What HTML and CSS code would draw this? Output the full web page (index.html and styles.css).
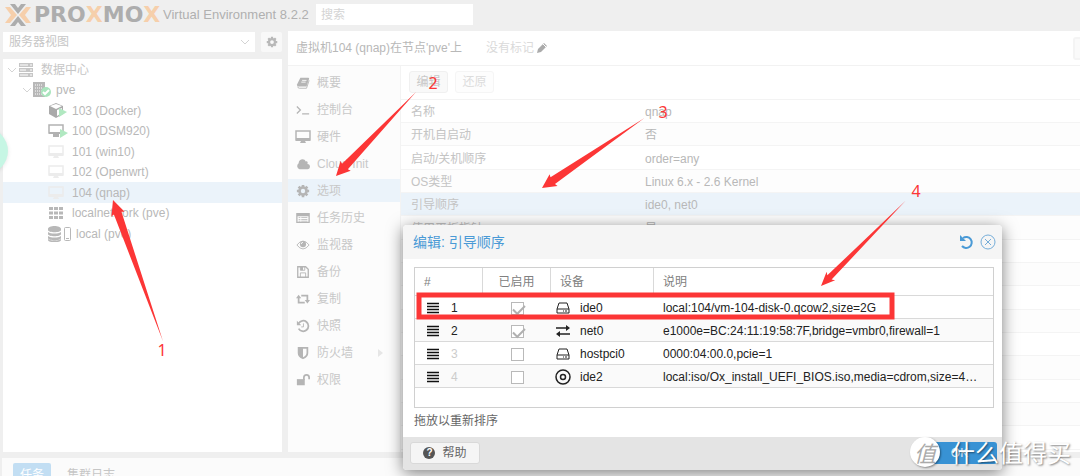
FILE: index.html
```html
<!DOCTYPE html>
<html lang="zh-CN">
<head>
  <meta charset="UTF-8">
  <meta name="viewport" content="width=device-width, initial-scale=1.0">
  <title>pve - Proxmox Virtual Environment</title>
  <link rel="stylesheet" href="styles.css">
</head>
<body>
  <svg class="sprite" aria-hidden="true">
    <symbol id="gear" viewBox="0 0 16 16"><circle cx="8" cy="8" r="4" fill="none" stroke="currentColor" stroke-width="3"/><path d="M8 1v3M8 12v3M1 8h3M12 8h3M3 3l2 2M11 11l2 2M13 3l-2 2M5 11l-2 2" stroke="currentColor" stroke-width="3"/></symbol>
    <symbol id="chevron" viewBox="0 0 10 10"><path d="M1 3l4 4 4-4" fill="none" stroke="currentColor"/></symbol>
    <symbol id="server" viewBox="0 0 16 14"><path d="M1 0h14v4H1zM1 5h14v4H1zM1 10h14v4H1z" fill="currentColor"/><path d="M2 2h8M2 7h6M2 12h8" stroke="#fff"/><path d="M13 1v2M13 6v2M13 11v2" stroke="#fff"/></symbol>
    <symbol id="node" viewBox="0 0 18 16"><path d="M0 0h12v15H0z" fill="currentColor"/><path d="M2 3h8M2 6h8M2 9h8M2 12h8" stroke="#fff" stroke-dasharray="1 1"/><circle cx="13" cy="10" r="5" fill="#a9e5bd"/><path d="M10 10l2 2 4-4" fill="none" stroke="#fff" stroke-width="2"/></symbol>
    <symbol id="cube" viewBox="0 0 20 16"><path d="M1 3l7-3 7 3v8l-7 4-7-4z" fill="#aaa"/><path d="M2 3l6-2 6 2-6 3zM9 7l5-2v5l-5 3z" fill="#fff"/><path d="M11 5l8 4-8 5z" fill="#b1e8c1"/></symbol>
    <symbol id="screen" viewBox="0 0 16 14"><path d="M1 1h14v9H1z" fill="none" stroke="currentColor" stroke-width="1.5"/><path d="M1 8h14v3H1zM6 11h4l1 2H5z" fill="currentColor"/></symbol>
    <symbol id="screen-on" viewBox="0 0 20 16"><path d="M1 2h14v8H1z" fill="none" stroke="#b2b2b2" stroke-width="1.5"/><path d="M1 9h11v2H1zM5 11h6v3H5z" fill="#b2b2b2"/><path d="M12 6l8 4-8 5z" fill="#b1e8c1"/></symbol>
    <symbol id="grid" viewBox="0 0 16 14"><path d="M1 1h4v3H1zM6 1h4v3H6zM11 1h4v3h-4zM1 5.500h4v3H1zM6 5.500h4v3H6zM11 5.500h4v3h-4zM1 10h4v3H1zM6 10h4v3H6zM11 10h4v3h-4z" fill="currentColor"/></symbol>
    <symbol id="store" viewBox="0 0 24 16"><path d="M0 3c0-4 13-4 13 0v1c0 3-13 3-13 0zM0 6c3 2 10 2 13 0v2c0 3-13 3-13 0zM0 10c3 2 10 2 13 0v2c0 3-13 3-13 0zM0 13c3 2 10 2 13 0v1c0 3-13 3-13 0z" fill="currentColor"/><rect x="16.5" y="1.500" width="6" height="13" rx="1" fill="none" stroke="currentColor"/><path d="M18 12.500h3" stroke="currentColor"/></symbol>
    <symbol id="book" viewBox="0 0 16 16"><path d="M5 2h9q1 0 1 1l-3 9H3q-2 0-2-2z" fill="currentColor"/><path d="M7 5h5M6 7h5" stroke="#fcfcfc"/><path d="M2 12q0 2 2 2h8l3-9" fill="none" stroke="currentColor"/></symbol>
    <symbol id="terminal" viewBox="0 0 16 16"><path d="M1 4l4 4-4 4M7 12.500h8" fill="none" stroke="currentColor" stroke-width="1.500"/></symbol>
    <symbol id="cloud" viewBox="0 0 16 16"><path d="M4 14a4 4 0 0 1-1-7C3 2 10 1 11 5c2-1 3 1 2 3 4 0 4 6 0 6z" fill="currentColor"/></symbol>
    <symbol id="list" viewBox="0 0 16 16"><path d="M1 3h14v10H1z" fill="none" stroke="currentColor" stroke-width="1.500"/><path d="M1 3h14v3H1zM3 7h2v1H3zM3 9h2v1H3zM3 11h2v1H3zM6 7h7v1H6zM6 9h7v1H6zM6 11h7v1H6z" fill="currentColor"/></symbol>
    <symbol id="eye" viewBox="0 0 16 16"><path d="M1 8q7-9 14 0-7 9-14 0z" fill="none" stroke="currentColor"/><circle cx="8" cy="7" r="3.500" fill="currentColor"/><path d="M6 7q0-2 2-2" stroke="#fcfcfc" fill="none"/></symbol>
    <symbol id="floppy" viewBox="0 0 16 16"><path d="M2 2h9l3 3v9H2z" fill="none" stroke="currentColor" stroke-width="1.500"/><path d="M5 14V9h6v5M5 2v4h5V2" fill="none" stroke="currentColor"/><path d="M5 2h3v4H5z" fill="currentColor"/></symbol>
    <symbol id="repeat" viewBox="0 0 16 16"><path d="M3 6v6h7M6 4h7v6" fill="none" stroke="currentColor" stroke-width="2"/><path d="M0 7l3-4 3 4zM10 9h6l-3 4z" fill="currentColor"/></symbol>
    <symbol id="history" viewBox="0 0 16 16"><path d="M3 5a6 6 0 1 1 0 6" fill="none" stroke="currentColor" stroke-width="2"/><path d="M1 2v5h5z" fill="currentColor"/><path d="M8.500 5v4H6" fill="none" stroke="currentColor"/></symbol>
    <symbol id="shield" viewBox="0 0 16 16"><path d="M3 2h10v6q0 4-5 6-5-2-5-6z" fill="none" stroke="currentColor" stroke-width="2"/><path d="M3 2h5v12q-5-3-5-6z" fill="currentColor"/></symbol>
    <symbol id="unlock" viewBox="0 0 16 16"><path d="M1 7h9v7H1z" fill="currentColor"/><path d="M9 8V5q0-3 3-3t3 3v2" fill="none" stroke="currentColor" stroke-width="2"/></symbol>
    <symbol id="pencil" viewBox="0 0 12 12"><path d="M1 11l1-4 6-6 3 3-6 6z" fill="currentColor"/><path d="M7 2l3 3" stroke="#fff"/></symbol>
    <symbol id="undo" viewBox="0 0 16 16"><path d="M4 4a5.500 5.500 0 1 1-1 8" fill="none" stroke="currentColor" stroke-width="2"/><path d="M1 1v6h6z" fill="currentColor"/></symbol>
    <symbol id="close" viewBox="0 0 16 16"><circle cx="8" cy="8" r="7" fill="none" stroke="currentColor"/><path d="M5 5l6 6M11 5l-6 6" stroke="currentColor"/></symbol>
    <symbol id="bars" viewBox="0 0 12 12"><path d="M0 1.500h12M0 4.500h12M0 7.500h12M0 10.500h12" stroke="currentColor" stroke-width="1.500"/></symbol>
    <symbol id="disk" viewBox="0 0 16 16"><path d="M2 9l2-6h8l2 6v4H2zM2 9h12" fill="none" stroke="currentColor" stroke-linejoin="round"/><path d="M8 11h1M10 11h2" stroke="currentColor"/></symbol>
    <symbol id="exchange" viewBox="0 0 16 16"><path d="M1 5h11M4 11h11" stroke="currentColor" stroke-width="1.500"/><path d="M11 2l4 3-4 3zM5 8l-4 3 4 3z" fill="currentColor"/></symbol>
    <symbol id="disc" viewBox="0 0 16 16"><circle cx="8" cy="8" r="7" fill="none" stroke="currentColor" stroke-width="1.500"/><circle cx="8" cy="8" r="2.500" fill="none" stroke="currentColor" stroke-width="1.500"/></symbol>
  </svg>

  <header class="topbar">
    <svg class="logo-mark" viewBox="0 0 28 24" aria-hidden="true">
      <path d="M1 4h5l7 8-7 8H1l6-8zM27 4h-5l-7 8 7 8h5l-6-8z" fill="#f6cfab"/>
      <path d="M6 1h5l3 4 3-4h5l-8 10zM6 23h5l3-4 3 4h5l-8-10z" fill="#adadad"/>
    </svg>
    <span class="logo-text">PRO<b>X</b>MO<b>X</b></span>
    <span class="version">Virtual Environment 8.2.2</span>
    <input class="search" type="text" placeholder="搜索" aria-label="搜索">
  </header>

  <main class="workspace">
    <aside class="sidebar">
      <div class="view-bar">
        <div class="view-select">
          <select aria-label="视图"><option>服务器视图</option></select>
          <svg class="chevron"><use href="#chevron"/></svg>
        </div>
        <button class="gear-button" aria-label="设置"><svg><use href="#gear"/></svg></button>
      </div>
      <ul class="tree">
        <li class="root"><svg class="chevron"><use href="#chevron"/></svg><svg class="tree-icon"><use href="#server"/></svg><span>数据中心</span></li>
        <li class="host"><svg class="chevron"><use href="#chevron"/></svg><svg class="tree-icon"><use href="#node"/></svg>pve</li>
        <li><svg class="tree-icon"><use href="#cube"/></svg>103 (Docker)</li>
        <li><svg class="tree-icon"><use href="#screen-on"/></svg>100 (DSM920)</li>
        <li><svg class="tree-icon off"><use href="#screen"/></svg>101 (win10)</li>
        <li><svg class="tree-icon off"><use href="#screen"/></svg>102 (Openwrt)</li>
        <li class="selected"><svg class="tree-icon off"><use href="#screen"/></svg>104 (qnap)</li>
        <li><svg class="tree-icon net"><use href="#grid"/></svg>localnetwork (pve)</li>
        <li><svg class="tree-icon wide"><use href="#store"/></svg>local (pve)</li>
      </ul>
    </aside>

    <section class="panel">
      <div class="panel-title">
        <span>虚拟机104 (qnap)在节点'pve'上</span>
        <span class="tags">没有标记<svg><use href="#pencil"/></svg></span>
        <button class="start-button" aria-label="启动"></button>
      </div>
      <div class="panel-body">
        <nav class="menu">
          <a href="#"><svg><use href="#book"/></svg>概要</a>
          <a href="#"><svg><use href="#terminal"/></svg>控制台</a>
          <a href="#"><svg><use href="#screen"/></svg>硬件</a>
          <a href="#"><svg><use href="#cloud"/></svg>Cloud-Init</a>
          <a href="#" class="selected"><svg><use href="#gear"/></svg>选项</a>
          <a href="#"><svg><use href="#list"/></svg>任务历史</a>
          <a href="#"><svg><use href="#eye"/></svg>监视器</a>
          <a href="#"><svg><use href="#floppy"/></svg>备份</a>
          <a href="#"><svg><use href="#repeat"/></svg>复制</a>
          <a href="#"><svg><use href="#history"/></svg>快照</a>
          <a href="#" class="has-sub"><svg><use href="#shield"/></svg>防火墙</a>
          <a href="#"><svg><use href="#unlock"/></svg>权限</a>
        </nav>
        <div class="content">
          <div class="toolbar">
            <button>编辑</button>
            <button class="disabled">还原</button>
          </div>
          <table class="options">
            <tr><th>名称</th><td>qnap</td></tr>
            <tr><th>开机自启动</th><td>否</td></tr>
            <tr><th>启动/关机顺序</th><td>order=any</td></tr>
            <tr><th>OS类型</th><td>Linux 6.x - 2.6 Kernel</td></tr>
            <tr class="selected"><th>引导顺序</th><td>ide0, net0</td></tr>
            <tr><th>使用平板指针</th><td>是</td></tr>
            <tr><th></th><td></td></tr>
            <tr><th></th><td></td></tr>
            <tr><th></th><td></td></tr>
            <tr><th></th><td></td></tr>
            <tr><th></th><td></td></tr>
            <tr><th></th><td></td></tr>
            <tr><th></th><td></td></tr>
            <tr><th></th><td></td></tr>
            <tr><th></th><td></td></tr>
          </table>
        </div>
      </div>
    </section>
  </main>

  <footer class="log-panel">
    <button class="tab active">任务</button>
    <button class="tab">集群日志</button>
  </footer>

  <div class="float-ball"></div>

  <div class="dialog" role="dialog" aria-labelledby="dialog-title">
    <div class="dialog-header">
      <h2 id="dialog-title">编辑: 引导顺序</h2>
      <button aria-label="重置"><svg><use href="#undo"/></svg></button>
      <button class="close" aria-label="关闭"><svg><use href="#close"/></svg></button>
    </div>
    <div class="dialog-body">
      <div class="boot-box">
        <table class="boot-table">
          <colgroup><col class="col-num"><col class="col-on"><col class="col-dev"><col></colgroup>
          <thead>
            <tr><th>#</th><th class="center">已启用</th><th>设备</th><th>说明</th></tr>
          </thead>
          <tbody>
            <tr>
              <td><div class="order"><svg><use href="#bars"/></svg>1</div></td>
              <td class="center"><input type="checkbox" aria-label="ide0" checked></td>
              <td><div class="device"><svg><use href="#disk"/></svg>ide0</div></td>
              <td>local:104/vm-104-disk-0.qcow2,size=2G</td>
            </tr>
            <tr>
              <td><div class="order"><svg><use href="#bars"/></svg>2</div></td>
              <td class="center"><input type="checkbox" aria-label="net0" checked></td>
              <td><div class="device"><svg><use href="#exchange"/></svg>net0</div></td>
              <td>e1000e=BC:24:11:19:58:7F,bridge=vmbr0,firewall=1</td>
            </tr>
            <tr>
              <td><div class="order unused"><svg><use href="#bars"/></svg>3</div></td>
              <td class="center"><input type="checkbox" aria-label="hostpci0"></td>
              <td><div class="device"><svg><use href="#disk"/></svg>hostpci0</div></td>
              <td>0000:04:00.0,pcie=1</td>
            </tr>
            <tr>
              <td><div class="order unused"><svg><use href="#bars"/></svg>4</div></td>
              <td class="center"><input type="checkbox" aria-label="ide2"></td>
              <td><div class="device"><svg><use href="#disc"/></svg>ide2</div></td>
              <td>local:iso/Ox_install_UEFI_BIOS.iso,media=cdrom,size=4…</td>
            </tr>
          </tbody>
        </table>
      </div>
      <p class="hint">拖放以重新排序</p>
    </div>
    <div class="dialog-footer">
      <button class="help"><span class="help-mark">?</span>帮助</button>
      <button class="ok">OK</button>
    </div>
  </div>

  <!-- step arrows, each drawn from its tip along the x axis -->
  <svg class="notes" viewBox="0 0 1080 476">
    <rect x="419" y="295" width="473" height="22"/>
    <polygon transform="translate(113 200) rotate(70.5)" points="0,0 15,-7 14,-4 150,0 14,4 15,7"/>
    <polygon transform="translate(336 176) rotate(-46.4)" points="0,0 14,-7 13,-4 116,0 13,4 14,7"/>
    <polygon transform="translate(542 188) rotate(-34.3)" points="0,0 14,-7 13,-4 124,0 13,4 14,7"/>
    <polygon transform="translate(821 286) rotate(-45.2)" points="0,0 14,-6 12,-3 120,0 12,3 14,6"/>
    <text x="162" y="356">1</text>
    <text x="433" y="89">2</text>
    <text x="663" y="118">3</text>
    <text x="916" y="197">4</text>
  </svg>

  <div class="watermark"><span class="badge">值</span>什么值得买</div>
</body>
</html>
```

FILE: styles.css
```css
* {
  box-sizing: border-box;
}

body {
  margin: 0;
  height: 100vh;
  overflow: hidden;
  position: relative;
  display: flex;
  flex-direction: column;
  background: #efefef;
  color: #b8b8b8;
  font-family: "Liberation Sans", "Noto Sans CJK SC", sans-serif;
  font-size: 12px;
  line-height: 16px;
}

button,
input,
select {
  font: inherit;
  color: inherit;
  margin: 0;
  padding: 0;
}

svg {
  flex: none;
}

.sprite {
  position: absolute;
  width: 0;
  height: 0;
}

/* top bar */
.topbar {
  display: flex;
  align-items: center;
  height: 31px;
  padding: 0 4px 2px;
}

.logo-mark {
  width: 28px;
  height: 24px;
}

.logo-text {
  margin-left: 2px;
  width: 129px;
  font-family: "DejaVu Sans", sans-serif;
  font-weight: bold;
  font-size: 22px;
  line-height: 24px;
  color: #adadad;
}

.logo-text b {
  color: #f6cfab;
}

.version {
  font-size: 13px;
  width: 149px;
  color: #b0b0b0;
}

.search {
  width: 157px;
  height: 21px;
  margin-left: 4px;
  padding: 0 5px;
  border: none;
  background: #fff;
}

.search::placeholder {
  color: #d4d4d4;
}

/* left side */
.workspace {
  flex: 1;
  min-height: 0;
  display: flex;
  gap: 6px;
  padding: 0 0 6px 3px;
}

.sidebar {
  width: 279px;
  flex: none;
  display: flex;
  flex-direction: column;
  gap: 7px;
  padding-top: 1px;
}

.view-bar {
  display: flex;
  gap: 6px;
}

.view-select {
  flex: 1;
  display: flex;
  align-items: center;
  height: 20px;
  padding: 0 5px 0 6px;
  background: #fff;
}

.view-select select {
  flex: 1;
  border: none;
  background: none;
  appearance: none;
  color: #c6c6c6;
}

.chevron {
  width: 10px;
  height: 10px;
  color: #d4d4d4;
}

.gear-button {
  width: 21px;
  height: 20px;
  border: none;
  border-radius: 2px;
  background: #f8f8f8;
  display: flex;
  align-items: center;
  justify-content: center;
}

.gear-button svg {
  width: 12px;
  height: 12px;
}

.tree {
  flex: 1;
  margin: 0;
  padding: 0;
  list-style: none;
  background: #fff;
}

.tree li {
  display: flex;
  align-items: center;
  height: 21px;
  padding-left: 45px;
}

.tree li:nth-child(even) {
  height: 20px;
}

.tree .root {
  padding-left: 4px;
  color: #c6c6c6;
}

.tree .root .tree-icon {
  width: 16px;
  margin: 0 7px 0 1px;
}

.tree .host {
  padding-left: 19px;
}

.tree .host .tree-icon {
  width: 18px;
  margin: 0 5px 0 1px;
}

.tree-icon {
  width: 20px;
  height: 16px;
  margin-right: 4px;
}

.tree-icon.off,
.tree-icon.net {
  width: 16px;
  margin-right: 8px;
}

.tree-icon.off {
  color: #ececec;
}

.tree-icon.wide {
  width: 24px;
}

.tree .selected {
  background: #ebf3fa;
}

/* vm panel */
.panel {
  flex: 1;
  min-width: 0;
  display: flex;
  flex-direction: column;
  overflow: hidden;
  background: #fff;
}

.panel-title {
  display: flex;
  align-items: center;
  height: 35px;
  padding-left: 8px;
  border-bottom: 1px solid #f2f2f2;
}

.tags {
  display: flex;
  align-items: center;
  margin-left: 24px;
  color: #dadada;
}

.tags svg {
  width: 12px;
  height: 12px;
  margin-left: 2px;
  color: #ababab;
}

/* runs past the edge of the panel */
.start-button {
  width: 60px;
  height: 23px;
  margin-left: auto;
  margin-right: -53px;
  border: 2px solid #f4f4f4;
  border-radius: 3px;
  background: #fafafa;
}

.panel-body {
  flex: 1;
  min-height: 0;
  display: flex;
}

.menu {
  width: 113px;
  flex: none;
  display: flex;
  flex-direction: column;
  gap: 4px;
  padding-top: 5px;
  background: #fcfcfc;
  border-right: 1px solid #f3f3f3;
}

.menu a {
  display: flex;
  align-items: center;
  gap: 6px;
  height: 23px;
  padding-left: 7px;
  color: #c8c8c8;
  text-decoration: none;
}

.menu svg {
  width: 16px;
  height: 14px;
  color: #b5b5b5;
}

.menu .selected {
  background: #ebf3fa;
}

.menu .has-sub::after {
  content: "";
  margin: 0 17px 0 auto;
  border-left: 5px solid #e6e6e6;
  border-top: 4px solid transparent;
  border-bottom: 4px solid transparent;
}

.content {
  flex: 1;
  min-width: 0;
}

.toolbar {
  display: flex;
  gap: 7px;
  padding: 5px 8px 6px;
  border-bottom: 1px solid #f3f3f3;
}

.toolbar button {
  width: 39px;
  height: 22px;
  border: 1px solid #f0f0f0;
  border-radius: 3px;
  background: #f9f9f9;
  color: #c8c8c8;
}

.toolbar .disabled {
  background: #fdfdfd;
  border-color: #f5f5f5;
  color: #dcdcdc;
}

.options {
  width: 100%;
  table-layout: fixed;
  border-spacing: 0;
}

.options th,
.options td {
  height: 23px;
  padding: 2px 0 0 10px;
  border-bottom: 1px solid #f4f4f4;
  font-weight: normal;
  text-align: left;
}

.options th {
  width: 234px;
  color: #c4c4c4;
}

.options tr:nth-child(3n) > * {
  height: 24px;
}

.options tr:nth-child(even) {
  background: #fdfdfd;
}

.options .selected {
  background: #ebf3fa;
}

/* task log */
.log-panel {
  flex: none;
  height: 18px;
  margin-left: 2px;
  padding: 5px 11px 0;
  display: flex;
  align-items: flex-start;
  gap: 3px;
  background: #fbfbfb;
}

.tab {
  flex: none;
  height: 24px;
  padding: 0 13px;
  border: none;
  border-radius: 2px;
  background: none;
  color: #c6c6c6;
}

.tab.active {
  padding: 0 7px;
  background: #c2def3;
  color: #fff;
}

.float-ball {
  position: absolute;
  left: -38px;
  top: 128px;
  width: 46px;
  height: 46px;
  border-radius: 50%;
  background: #c6f6e4;
  box-shadow: 0 1px 4px rgba(0, 0, 0, 0.1);
}

/* boot order window */
.dialog {
  position: absolute;
  left: 403px;
  top: 225px;
  width: 599px;
  border-radius: 4px;
  overflow: hidden;
  background: #fff;
  color: #222;
  box-shadow: 0 3px 16px rgba(0, 0, 0, 0.5);
}

.dialog-header {
  display: flex;
  align-items: center;
  gap: 5px;
  height: 34px;
  padding: 0 6px 0 10px;
  background: #f5f5f5;
  color: #4a9ad6;
}

.dialog-header h2 {
  flex: 1;
  margin: 0;
  font-size: 14px;
  font-weight: normal;
}

.dialog-header button {
  width: 16px;
  height: 16px;
  border: none;
  background: none;
}

.dialog-header svg {
  display: block;
  width: 16px;
  height: 16px;
}

.dialog-header .close {
  color: #75add8;
}

.dialog-body {
  padding: 8px 8px 8px 11px;
}

.boot-box {
  height: 141px;
  border: 1px solid #d0d0d0;
}

.boot-table {
  width: 100%;
  table-layout: fixed;
  border-spacing: 0;
}

.col-num,
.col-on {
  width: 68px;
}

.col-dev {
  width: 103px;
}

.boot-table th,
.boot-table td {
  height: 23px;
  padding: 2px 9px 0;
  border-bottom: 1px solid #d9d9d9;
  text-align: left;
  white-space: nowrap;
}

.boot-table th {
  height: 28px;
  padding-top: 0;
  border-right: 1px solid #d9d9d9;
  font-weight: normal;
  color: #808080;
}

.boot-table th:last-child {
  border-right: none;
}

.boot-table tbody tr:nth-child(even) {
  background: #fafafa;
}

.boot-table .center {
  text-align: center;
}

.order,
.device {
  display: flex;
  align-items: center;
}

.order {
  gap: 12px;
  padding-left: 3px;
}

.order.unused {
  color: #ccc;
}

.order svg {
  width: 12px;
  height: 12px;
  color: #111;
}

.device {
  gap: 9px;
  margin-left: -5px;
}

.device svg {
  width: 16px;
  height: 16px;
}

.boot-table input {
  appearance: none;
  display: block;
  width: 13px;
  height: 13px;
  margin: 0 auto;
  border: 1px solid #b9b9b9;
  background: #fff;
}

.boot-table input:checked::before {
  content: "";
  display: block;
  width: 10px;
  height: 5px;
  margin: 2px 1px;
  border-left: 2px solid #b0b0b0;
  border-bottom: 2px solid #b0b0b0;
  transform: rotate(-45deg);
}

.hint {
  margin: 5px 0 0;
  color: #666;
}

.dialog-footer {
  display: flex;
  justify-content: space-between;
  padding: 5px 5px 6px 7px;
  background: #e4e4e4;
}

.dialog-footer button {
  display: flex;
  align-items: center;
  justify-content: center;
  height: 22px;
  border-radius: 3px;
}

.help {
  width: 70px;
  gap: 7px;
  border: 1px solid #d9d9d9;
  background: #f5f5f5;
  color: #666;
}

.help-mark {
  width: 12px;
  height: 12px;
  border-radius: 50%;
  background: #555;
  color: #fff;
  font-size: 10px;
  font-weight: bold;
  line-height: 12px;
}

.ok {
  width: 75px;
  border: none;
  background: #3892d4;
  color: #d6e8f6;
}

/* red step marks */
.notes {
  position: absolute;
  left: 0;
  top: 0;
  width: 1080px;
  height: 476px;
  pointer-events: none;
  fill: #fc3636;
}

.notes rect {
  fill: none;
  stroke: #fc3636;
  stroke-width: 5px;
}

.notes text {
  font-family: "Noto Sans", sans-serif;
  font-size: 16px;
  text-anchor: middle;
}

.watermark {
  position: absolute;
  right: 9px;
  bottom: 8px;
  display: flex;
  align-items: center;
  gap: 11px;
  color: #fff;
  font-family: "Noto Sans CJK SC", sans-serif;
  font-size: 24px;
  line-height: 32px;
  text-shadow: 1px 1px 2px rgba(0, 0, 0, 0.5);
}

.badge {
  width: 30px;
  height: 30px;
  border-radius: 50%;
  background: #fff;
  color: #aaa;
  font-size: 22px;
  font-style: italic;
  line-height: 30px;
  text-align: center;
  text-shadow: none;
  box-shadow: 1px 1px 2px rgba(0, 0, 0, 0.4);
}
```
